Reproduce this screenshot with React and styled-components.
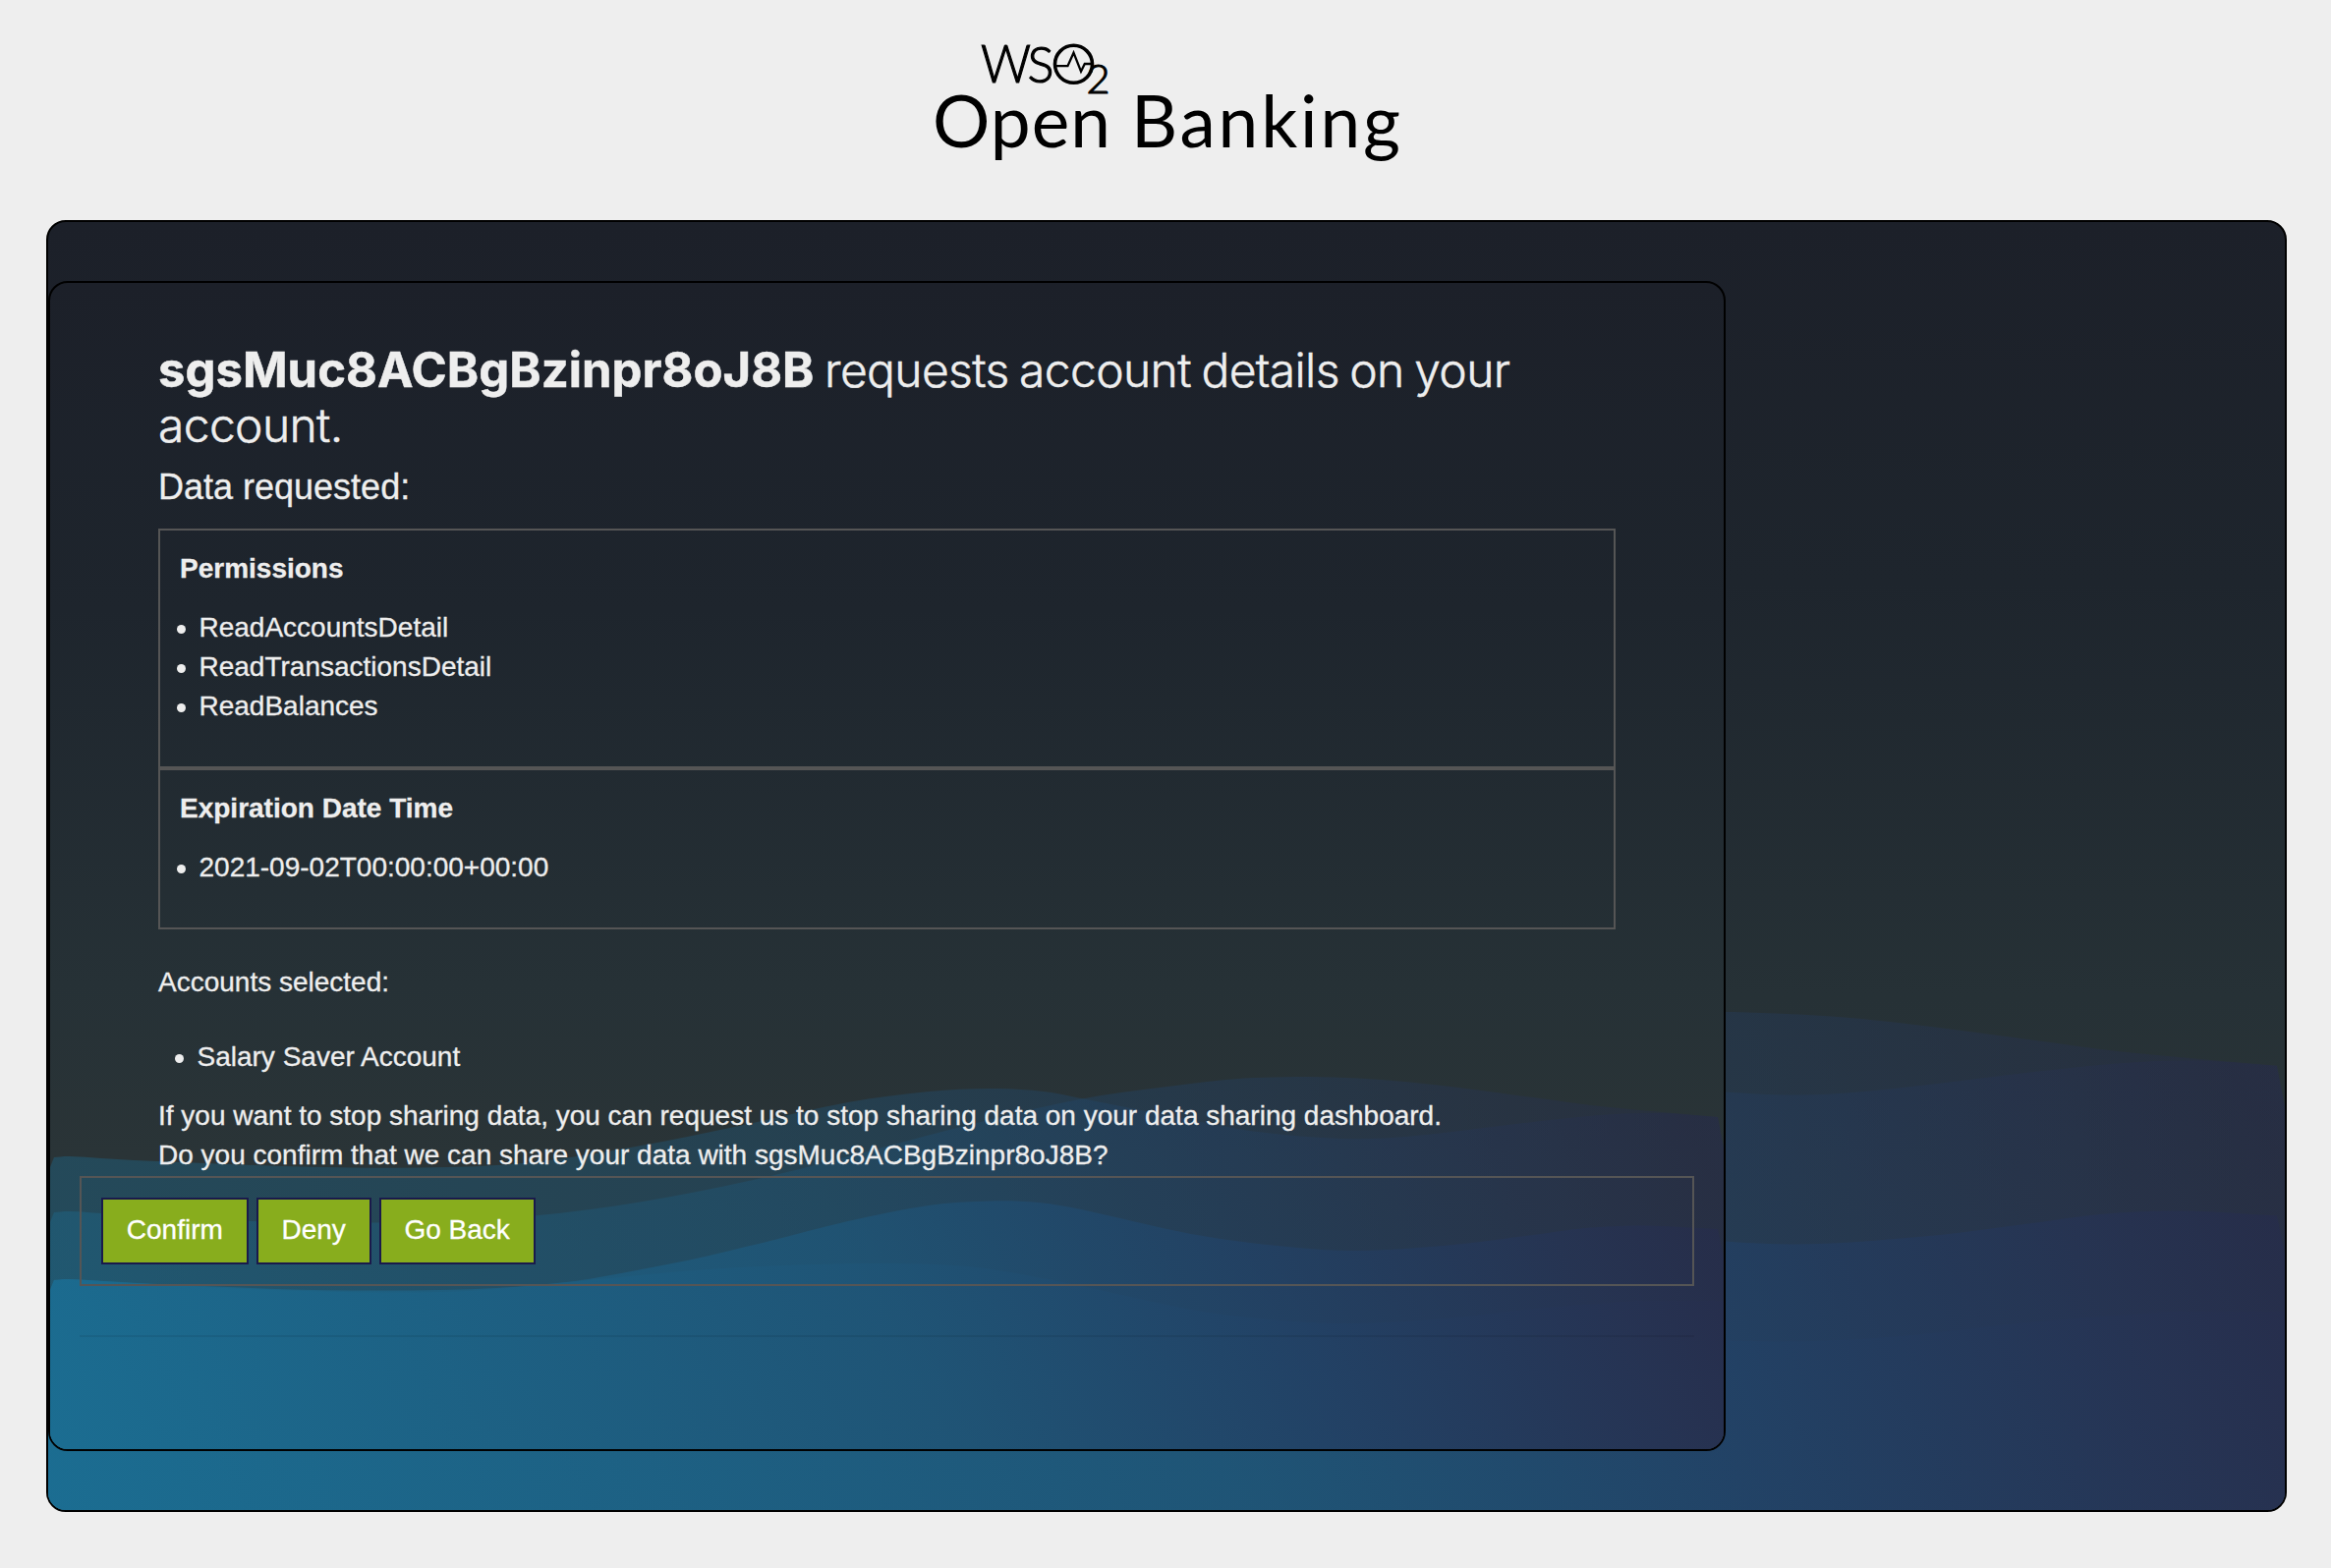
import React from "react";
import styled, { createGlobalStyle } from "styled-components";

const GlobalStyle = createGlobalStyle`
  * { box-sizing: border-box; }
  body {
    margin: 0;
    background: #eeeeee;
    color: #eeeeee;
    font: 28px/40px "Liberation Sans", Helvetica, Arial, sans-serif;
  }
`;

const Page = styled.div`
  min-height: 1596px;
  display: flex;
  flex-direction: column;
`;

const Header = styled.header`
  height: 224px;
  padding: 30px 0 0 4px;
  display: flex;
  justify-content: center;
  align-items: flex-start;
`;

const Panel = styled.div`
  position: relative;
  isolation: isolate;
  overflow: hidden;
  border: 2px solid #000;
  border-radius: 20px;
  background: linear-gradient(#1c2029, #1e252d 28%, #263136 60%, #2a3437 75%, #2a3437);
`;

const Outer = styled(Panel)`
  margin: 0 45px 0 47px;
  height: 1315px;
  padding: 60px 0;
`;

const Inner = styled(Panel)`
  width: 75%;
  height: 1191px;
  padding: 61px 30px 0;
  -webkit-text-stroke: 0.3px currentColor;
`;

const WaveLayer = styled.svg`
  position: absolute;
  left: 0;
  bottom: 0;
  width: 100%;
  z-index: -1;
`;

const Details = styled.section`
  width: 1483px;
  margin-left: 80px;
`;

const Title = styled.h3`
  margin: 0;
  font: 350 48px/56px Inter, "Open Sans", sans-serif;
  letter-spacing: -0.65px;
  word-spacing: -2.3px;
  -webkit-text-stroke: 0.5px currentColor;

  strong {
    font-size: 49px;
    line-height: 1;
    font-weight: 700;
    letter-spacing: 0.03px;
  }
`;

const Subtitle = styled.h4`
  margin: 15px 0 22px;
  font-size: 36px;
  font-weight: 400;
  line-height: 40px;
`;

const DataBox = styled.div`
  border: 2px solid #555;
  padding: 19px 20px 41px;
`;

const BoxTitle = styled.div`
  font-weight: 700;
  margin-bottom: 20px;
`;

const List = styled.ul`
  list-style: none;
  margin: 0 0 0 ${(p) => p.$indent}px;
  padding: 0;
`;

const Item = styled.li`
  display: flex;
  align-items: center;
  gap: 13.5px;

  &::before {
    content: "";
    width: 9px;
    height: 9px;
    margin-top: 2px;
    border-radius: 50%;
    background: #eee;
  }
`;

const Text = styled.p`
  margin: ${(p) => p.$margin || "0"};
`;

const Actions = styled.div`
  display: flex;
  gap: 8px;
  height: 112px;
  margin-top: 1px;
  padding: 20px;
  border: 2px solid #555;
`;

const Button = styled.button`
  height: 68px;
  padding: 11px 23.8px 13px;
  border: 2px solid #1a1a4b;
  background: #88ad1d;
  color: #fff;
  font: inherit;
`;

const Divider = styled.hr`
  height: 2px;
  margin: 50px 0 0;
  border: 0;
  background: rgba(0, 0, 0, 0.07);
`;

const WAVES = [
  {
    opacity: 0.4,
    points: [[51, 1188], [55, 1178], [70, 1177], [136, 1181], [358, 1188.5], [521, 1185], [647, 1167], [757, 1145], [863, 1122], [945, 1111], [1008, 1108], [1062, 1111], [1100, 1118], [1212, 1140], [1280, 1152], [1366, 1159], [1430, 1157], [1560, 1142], [1628, 1135], [1687, 1133], [1748, 1137], [1754, 1168]],
  },
  {
    opacity: 0.4,
    points: [[51, 1244], [55, 1234], [70, 1233], [103, 1235], [254, 1243], [410, 1244], [543, 1237.5], [654, 1223], [780, 1198], [890, 1170], [994, 1143], [1098, 1119], [1188, 1106], [1260, 1098], [1333, 1096], [1430, 1101], [1560, 1117], [1628, 1126], [1748, 1137], [1754, 1168]],
  },
  {
    opacity: 0.78,
    points: [[51, 1313], [55, 1303], [70, 1302], [136, 1306], [358, 1313.5], [550, 1308], [684, 1286], [780, 1264], [863, 1243], [945, 1227], [1008, 1222.5], [1057, 1224], [1100, 1231], [1212, 1256], [1300, 1268], [1380, 1273], [1479, 1267], [1560, 1257], [1613, 1250], [1672, 1247.5], [1748, 1251], [1754, 1280]],
  },
  {
    opacity: 0.8,
    points: [[51, 1313], [55, 1303], [70, 1302], [250, 1312], [450, 1315], [600, 1303], [706, 1293], [800, 1288], [897, 1286], [994, 1290], [1091, 1307], [1212, 1333], [1290, 1343], [1366, 1347], [1460, 1343], [1553, 1333], [1665, 1324], [1754, 1324]],
  },
];

const wavePath = (pts) => {
  let d = `M${pts[0]}L${pts[1]}`;
  for (let i = 1; i < pts.length - 2; i++) {
    const a = i > 1 ? pts[i - 1] : pts[i];
    const b = pts[i];
    const c = pts[i + 1];
    const e = i < pts.length - 3 ? pts[i + 2] : c;
    const dx = (c[0] - b[0]) / 3;
    const s1 = (c[1] - a[1]) / (c[0] - a[0]);
    const s2 = (e[1] - b[1]) / (e[0] - b[0]);
    d += `C${b[0] + dx},${b[1] + s1 * dx} ${c[0] - dx},${c[1] - s2 * dx} ${c}`;
  }
  return `${d}L${pts[pts.length - 1]}V1476H51Z`;
};

const Waves = ({ id }) => (
  <WaveLayer viewBox="51 1075 1703 400" aria-hidden="true">
    <defs>
      <linearGradient id={id} gradientUnits="userSpaceOnUse" x1="51" y1="1475" x2="1515" y2="743">
        <stop offset="0" stopColor="#1b6e93" />
        <stop offset="0.5" stopColor="#1f5577" />
        <stop offset="0.72" stopColor="#224266" />
        <stop offset="0.91" stopColor="#263353" />
        <stop offset="1" stopColor="#262c4a" />
      </linearGradient>
    </defs>
    {WAVES.map((w, i) => (
      <path key={i} d={wavePath(w.points)} fill={`url(#${id})`} fillOpacity={w.opacity} />
    ))}
  </WaveLayer>
);

const Logo = () => (
  <svg width="480" height="140" viewBox="948 30 480 140" fill="#000" fontFamily="Lato, sans-serif">
    <g fontWeight="300" stroke="#000" strokeWidth="1.2">
      <text x="998" y="84" fontSize="53" textLength="51" lengthAdjust="spacingAndGlyphs">W</text>
      <text x="1045.5" y="83.5" fontSize="52" textLength="27" lengthAdjust="spacingAndGlyphs">S</text>
      <text x="1105.5" y="95" fontSize="42" textLength="24" lengthAdjust="spacingAndGlyphs">2</text>
    </g>
    <circle cx="1092.5" cy="65.3" r="19" fill="none" stroke="#000" strokeWidth="3.6" />
    <path d="M1075 67.2h11.5l6-13.5 7.5 19 3.8-7.7h9" fill="none" stroke="#000" strokeWidth="2.3" />
    <text x="949" y="149.5" fontSize="73" textLength="181">Open</text>
    <text x="1151" y="149.5" fontSize="73" textLength="274">Banking</text>
  </svg>
);

const APP_ID = "sgsMuc8ACBgBzinpr8oJ8B";

export default function App() {
  return (
    <Page>
      <GlobalStyle />
      <Header>
        <Logo />
      </Header>
      <Outer>
        <Waves id="outer-wave" />
        <Inner>
          <Waves id="inner-wave" />
          <Details>
            <Title>
              <strong>{APP_ID}</strong> requests account details on your account.
            </Title>
            <Subtitle>Data requested:</Subtitle>
            <DataBox>
              <BoxTitle>Permissions</BoxTitle>
              <List $indent={-3}>
                <Item>ReadAccountsDetail</Item>
                <Item>ReadTransactionsDetail</Item>
                <Item>ReadBalances</Item>
              </List>
            </DataBox>
            <DataBox>
              <BoxTitle>Expiration Date Time</BoxTitle>
              <List $indent={-3}>
                <Item>2021-09-02T00:00:00+00:00</Item>
              </List>
            </DataBox>
            <Text $margin="34px 0 36px">Accounts selected:</Text>
            <List $indent={17}>
              <Item>Salary Saver Account</Item>
            </List>
            <Text $margin="20px 0 0">
              If you want to stop sharing data, you can request us to stop sharing data on your data sharing dashboard.
            </Text>
            <Text>Do you confirm that we can share your data with {APP_ID}?</Text>
          </Details>
          <Actions>
            <Button>Confirm</Button>
            <Button>Deny</Button>
            <Button>Go Back</Button>
          </Actions>
          <Divider />
        </Inner>
      </Outer>
    </Page>
  );
}
